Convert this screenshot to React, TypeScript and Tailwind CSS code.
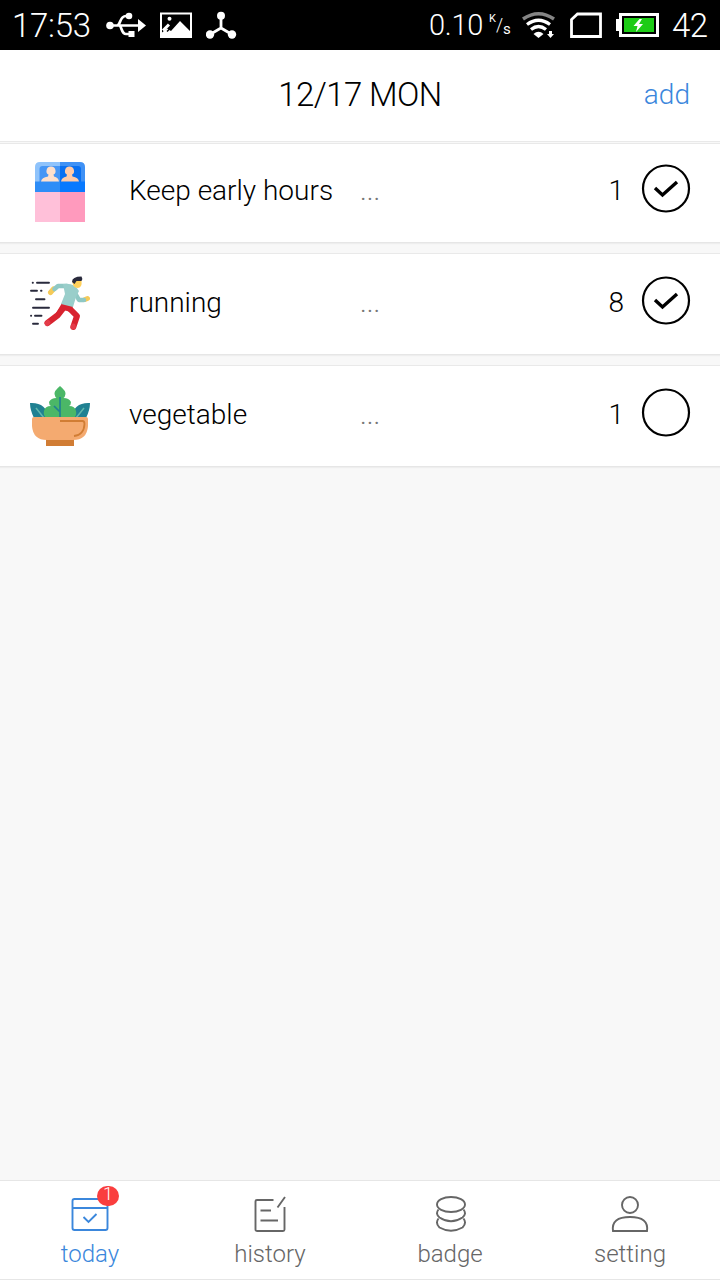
import React from "react";

function StatusBar() {
  return (
    <div className="flex h-[50px] shrink-0 items-center justify-between bg-black pl-3 pr-[13px] text-white">
      <div className="flex items-center">
        <span className="w-[94px] pt-[2px] text-[33px] leading-[50px] font-light tracking-[-0.3px]">17:53</span>
        <svg className="h-[50px] w-[40px]" viewBox="106 0 40 50" fill="none" stroke="white" strokeWidth="2.7">
          <circle cx="110" cy="25.5" r="3.8" fill="white" stroke="none" />
          <path d="M110 25.5H139M117 25.5C121 25.5 119 16 126 16H128M119 25.5C122 25.5 121 34 126 34H130" />
          <circle cx="129" cy="16" r="3.3" fill="white" stroke="none" />
          <path d="M128.5 31h6v6h-6zM138 19l8 6.5-8 6.5z" fill="white" stroke="none" />
        </svg>
        <svg className="ml-[14px] h-[50px] w-[32px]" viewBox="160 0 32 50">
          <path fill="white" fillRule="evenodd" d="M160 12.500h32v25.500h-32zM162 14.500v18l5-4 4 2.500 9-10 10 10V14.500z" />
          <circle cx="169.500" cy="18.800" r="2" fill="white" />
          <path d="M163 30.500l6-6" stroke="white" strokeWidth="3" />
          <path d="M167 31.500l5-5" stroke="black" strokeWidth="1.500" />
        </svg>
        <svg className="ml-[14px] h-[50px] w-[31px]" viewBox="206 0 31 50">
          <path d="M221 16v12l-11 6.500M221 28l11 6.500" fill="none" stroke="white" strokeWidth="2.800" />
          <g fill="white">
            <circle cx="221" cy="15.700" r="4" />
            <circle cx="210" cy="34.500" r="4.200" />
            <circle cx="232" cy="34.500" r="4.200" />
          </g>
        </svg>
      </div>
      <div className="flex items-center">
        <span className="w-[60px] text-[29px] leading-[50px] font-light tracking-[-0.3px]">0.10</span>
        <div className="flex w-[22px] leading-none">
          <span className="-translate-y-[6px] text-[11px] leading-5">K</span>
          <span className="text-[18px] leading-5 font-light">/</span>
          <span className="translate-y-[4px] text-[15px] leading-5">s</span>
        </div>
        <svg className="ml-[11px] h-[50px] w-[34px]" viewBox="522 0 34 50" fill="none" stroke="white" strokeWidth="3">
          <path d="M523 19Q538.500 8.500 554 19" stroke="#858585" strokeWidth="3.500" />
          <path d="M527 24.500Q538.500 16 550 24.500M531 29.500Q538.500 23.500 546 29.500" strokeWidth="3.300" />
          <path d="M533.500 34Q538.500 29.500 543.500 34L538.500 38zM549 31h3v3h2l-3.500 4-3.500-4h2z" fill="white" stroke="none" />
        </svg>
        <svg className="ml-[14px] h-[50px] w-[32px]" viewBox="570 0 32 50">
          <path d="M571.500 36V19.500L577.500 14H600.500V36.500H571.500z" fill="none" stroke="white" strokeWidth="2.800" />
        </svg>
        <svg className="ml-[14px] h-[50px] w-[43px]" viewBox="616 0 43 50">
          <path d="M616 19h4v12h-4z" fill="white" />
          <path d="M620.500 14.500h37v21h-37z" fill="none" stroke="white" strokeWidth="3" />
          <path d="M624 18h30v14h-30z" fill="#1dcc16" />
          <path d="M639.500 19l-6 7h4l-1.500 6 7-8h-4l3-5z" fill="white" />
        </svg>
        <span className="ml-[13px] w-[35px] pt-[2px] text-[33px] leading-[50px] font-light tracking-[-0.5px]">42</span>
      </div>
    </div>
  );
}

function BedIcon() {
  return (
    <svg className="size-[60px]" viewBox="0 0 60 60">
      <path d="M5 5Q5 0 10 0H30V20H5z" fill="#8fc3fb" />
      <path d="M30 0H50Q55 0 55 5V20H30z" fill="#3f91f5" />
      <path d="M9.500 7Q9.500 4 12.500 4H30V20H9.500z" fill="#4696f5" />
      <path d="M30 4H48Q51 4 51 7V20H30z" fill="#0870f2" />
      <path d="M5 19.500h25v11H5z" fill="#2e8df7" />
      <path d="M30 19.500h25v11H30z" fill="#0879ff" />
      <path d="M11 19.500q.5-4 7-5l.5-2q-2.500-1-2-4Q17 4.500 21 4.500T25.500 8.500q.5 3-2 4l.5 2q4.500 1 5 5z" fill="#ffe0cb" />
      <path d="M31 19.500q.5-4 5.500-5l.5-2q-2.500-1-2-4Q35.500 4.500 39.500 4.500T44 8.500q.5 3-2 4l.5 2q6 1 6.500 5z" fill="#ffcba9" />
      <path d="M5 30h25v30H5z" fill="#ffc0d9" />
      <path d="M30 30h25v30H30z" fill="#ff9abd" />
    </svg>
  );
}

function RunIcon() {
  return (
    <svg className="size-[60px]" viewBox="0 0 60 60" fill="none" strokeLinecap="round" strokeLinejoin="round">
      <path
        d="M2.700 8.700h.2M7 8.700h12M1 16.700h6M11 16.700h.5M6 25.300h8.500M3 33.700h16M1 41.700h.2M5 41.700h6.500M3 49.700h5"
        stroke="#292a3c"
        strokeWidth="1.900"
      />
      <path d="M20.500 18.500l3-3.500M55 25.500l2.500-1" stroke="#f5ca58" strokeWidth="5" />
      <path d="M35 32L28 41L17.500 49M38 33L47 42L43.300 53" stroke="#d8232f" strokeWidth="6" />
      <path d="M32 29L43 32L41 38L33 36L29 42L26 39z" fill="#d8232f" />
      <path d="M17 49.500l1-1M43.300 53v-1" stroke="#e43b49" strokeWidth="5" />
      <path d="M24.500 15L28 12L37 12L45 19L49 26L54 26" stroke="#8fc8c4" strokeWidth="4.500" />
      <path d="M33 10Q44 8 49 17L46 23 43 33 31 30 35 20z" fill="#99ceca" />
      <path d="M43 7l8.500 0q1 6.500-4 7Q42.500 13.500 42.500 8z" fill="#ffd15c" />
      <path d="M42 8q0-5.500 9.500-5.500 1.500 2 0 4.500l-5 0-2 3z" fill="#292a3c" />
    </svg>
  );
}

function BowlIcon() {
  return (
    <svg className="size-[60px]" viewBox="0 0 60 60">
      <path d="M0 17Q16 16 19 32H4Q0 24 0 17zM60 17Q44 16 41 32H56Q60 24 60 17z" fill="#208192" />
      <path d="M6 22L14 32M54 22L46 32" stroke="#60b8ad" strokeWidth="1.500" />
      <path d="M30 0Q36 5 35.500 8Q35 11 33.500 12Q39 12 41 16Q41 19 39 20Q45 20 46 25Q47 29 44 32H16Q13 29 14 25Q15 20 21 20Q19 19 19 16Q21 12 26.500 12Q25 11 24.500 8Q24 5 30 0z" fill="#4bb767" />
      <path d="M30 11V31M30 26l-6-6" fill="none" stroke="#208192" strokeWidth="1.700" />
      <path d="M16 53H44V60H16z" fill="#d17d34" />
      <path d="M4 31H56Q58 31 58 33V40Q57 54 43 54H17Q3 54 2 40V33Q2 31 4 31z" fill="#f4aa70" />
      <path d="M30 35H52.500Q54.500 35 54.500 38Q54 49 44 50" fill="none" stroke="#d17d34" strokeWidth="1.800" />
    </svg>
  );
}

interface HabitProps {
  name: string;
  count: number;
  done?: boolean;
  first?: boolean;
  icon: React.ReactNode;
}

function HabitRow({ name, count, done, first, icon }: HabitProps) {
  return (
    <div
      className={
        "flex items-center border-y border-t-[#e9e9e9] border-b-[#e6e6e6] bg-white pl-[30px] pr-[29px] shadow-[0_1px_1px_#eeeeee] " +
        (first ? "mt-px h-[100px] pb-[2px]" : "mt-[10px] h-[102px]")
      }
    >
      {icon}
      <span className="ml-[39px] w-[231px] pb-[3px] text-[28px] leading-8 font-light text-black">{name}</span>
      <span className="pb-[3px] text-[28px] leading-8 font-light text-[#777]">...</span>
      <span className="ml-auto pb-[3px] text-[28px] leading-8 font-light text-black">{count}</span>
      <svg className="ml-[17px] size-[50px] -translate-y-[3px]" viewBox="0 0 50 50" fill="none" stroke="black">
        <circle cx="25" cy="24.500" r="23" strokeWidth="2.200" />
        {done && <path d="M14 24L21.500 31L36 18" strokeWidth="3.400" />}
      </svg>
    </div>
  );
}

const TodayIcon = (
  <>
    <rect x="2.500" y="4" width="35" height="31" rx="2" />
    <path d="M2.500 13H37.500M13.500 22L18.500 27L26.500 19" />
  </>
);
const HistoryIcon = (
  <path d="M23.500 5H7Q5.500 5 5.500 6.500V34.500Q5.500 36 7 36H33Q34.500 36 34.500 34.500V12M27.500 12.500L35 2M10.500 15.500H21M10.500 25.500H28" />
);
const BadgeIcon = (
  <>
    <ellipse cx="21" cy="9.500" rx="14" ry="7.500" />
    <path d="M8.500 14.500Q5 19 9.500 22.500Q21 30 32.500 22.500Q37 19 33.500 14.500M8.500 23.500Q5 28 9.500 32.500Q21 39 32.500 32.500Q37 28 33.500 23.500" />
  </>
);
const PersonIcon = (
  <>
    <circle cx="20" cy="10" r="8" />
    <path d="M3 36Q1 22 20 22Q39 22 37 36Z" />
  </>
);

interface TabProps {
  label: string;
  active?: boolean;
  badge?: number;
  children: React.ReactNode;
}

function Tab({ label, active, badge, children }: TabProps) {
  return (
    <div className={"flex flex-1 flex-col items-center pt-[14px] " + (active ? "text-[#3b87dc]" : "text-[#666]")}>
      <div className="relative">
        <svg className="size-[40px]" viewBox="0 0 40 40" fill="none" stroke="currentColor" strokeWidth="1.900">
          {children}
        </svg>
        {badge && (
          <span className="absolute top-[-9px] left-[27px] flex h-5 w-[22px] items-center justify-center rounded-full bg-[#fa3e3e] pb-[4px] text-[18px] leading-none font-light text-white">
            {badge}
          </span>
        )}
      </div>
      <span className="mt-1 text-[24px] leading-[30px] font-light">{label}</span>
    </div>
  );
}

export default function App() {
  return (
    <div className="flex h-[1280px] w-[720px] flex-col overflow-hidden bg-[#f8f8f8] font-['Roboto',sans-serif]">
      <StatusBar />
      <header className="grid h-[92px] shrink-0 grid-cols-3 items-center border-b border-[#e9e9e9] bg-white px-[30px] pb-[2px]">
        <span />
        <h1 className="text-center text-[33px] leading-10 font-light tracking-[-0.6px] text-black">12/17 MON</h1>
        <button className="text-right text-[28px] leading-8 font-light text-[#3b87dc]">add</button>
      </header>
      <main className="flex-1">
        <HabitRow first name="Keep early hours" count={1} done icon={<BedIcon />} />
        <HabitRow name="running" count={8} done icon={<RunIcon />} />
        <HabitRow name="vegetable" count={1} icon={<BowlIcon />} />
      </main>
      <nav className="flex h-[100px] shrink-0 border-y border-[#e6e6e6] bg-white">
        <Tab label="today" active badge={1}>{TodayIcon}</Tab>
        <Tab label="history">{HistoryIcon}</Tab>
        <Tab label="badge">{BadgeIcon}</Tab>
        <Tab label="setting">{PersonIcon}</Tab>
      </nav>
    </div>
  );
}
